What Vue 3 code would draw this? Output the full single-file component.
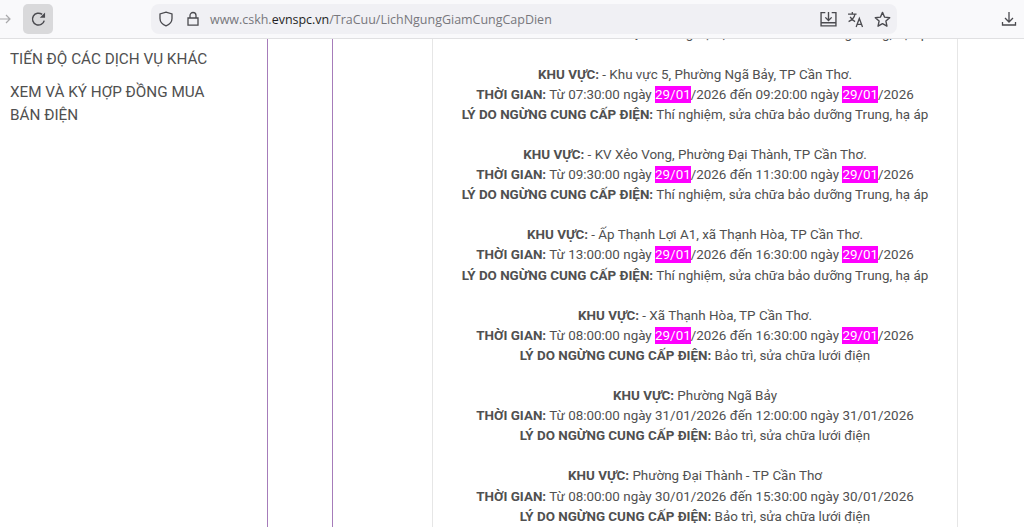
<script setup>
const hl = '29/01'
const rows = [
  { area: '- Khu vực 5, Phường Ngã Bảy, TP Cần Thơ.', from: '07:30:00', d1: hl, to: '09:20:00', d2: hl, reason: 'Thí nghiệm, sửa chữa bảo dưỡng Trung, hạ áp', mark: true },
  { area: '- KV Xẻo Vong, Phường Đại Thành, TP Cần Thơ.', from: '09:30:00', d1: hl, to: '11:30:00', d2: hl, reason: 'Thí nghiệm, sửa chữa bảo dưỡng Trung, hạ áp', mark: true },
  { area: '- Ấp Thạnh Lợi A1, xã Thạnh Hòa, TP Cần Thơ.', from: '13:00:00', d1: hl, to: '16:30:00', d2: hl, reason: 'Thí nghiệm, sửa chữa bảo dưỡng Trung, hạ áp', mark: true },
  { area: '- Xã Thạnh Hòa, TP Cần Thơ.', from: '08:00:00', d1: hl, to: '16:30:00', d2: hl, reason: 'Bảo trì, sửa chữa lưới điện', mark: true },
  { area: 'Phường Ngã Bảy', from: '08:00:00', d1: '31/01', to: '12:00:00', d2: '31/01', reason: 'Bảo trì, sửa chữa lưới điện', mark: false },
  { area: 'Phường Đại Thành - TP Cần Thơ', from: '08:00:00', d1: '30/01', to: '15:30:00', d2: '30/01', reason: 'Bảo trì, sửa chữa lưới điện', mark: false }
]
</script>

<template>
  <div class="page">
    <header class="toolbar">
      <svg class="forward" width="14" height="14" viewBox="0 0 14 14"><path d="M-1 7h11M6 3l4 4-4 4" fill="none" stroke="#a9a9ab" stroke-width="1.2"/></svg>
      <div class="reload">
        <svg width="17" height="17" viewBox="0 0 16 16"><path d="M13.4 9A5.6 5.6 0 1 1 11.4 3.2" fill="none" stroke="#4a4a4f" stroke-width="1.4"/><path d="M14.2 1.4v5h-5z" fill="#4a4a4f"/></svg>
      </div>
      <div class="urlbar">
        <svg class="ic" width="16" height="16" viewBox="0 0 16 16"><path d="M8 1.2 14 3v4.4c0 3.6-2.6 6-6 7.4-3.4-1.4-6-3.8-6-7.4V3z" fill="none" stroke="#4a4a4f" stroke-width="1.3"/></svg>
        <svg class="ic lock" width="16" height="16" viewBox="0 0 16 16"><path d="M5 7V4.5a3 3 0 0 1 6 0V7M3 7h10v7.2H3z" fill="none" stroke="#4a4a4f" stroke-width="1.3"/></svg>
        <span class="url"><span class="dim">www.cskh.</span><span class="host">evnspc.vn</span><span class="dim">/TraCuu/LichNgungGiamCungCapDien</span></span>
        <span class="spacer"></span>
        <svg class="act" width="17" height="17" viewBox="0 0 16 16"><path d="M5 1.5H1v12.5h14V1.5h-4M8 1v7.5M5 6l3 3 3-3M1 11h14" fill="none" stroke="#4a4a4f" stroke-width="1.3"/></svg>
        <svg class="act" width="17" height="17" viewBox="0 0 16 16"><path d="M1 3h8M5 1v2M7.5 3C7 6 4.5 8.6 1.5 10M3 5.5c1 2 3 3.6 4.6 4.5M8.6 15l3-8 3 8M9.7 12.6h3.8" fill="none" stroke="#4a4a4f" stroke-width="1.2"/></svg>
        <svg class="act" width="17" height="17" viewBox="0 0 16 16"><path d="M8 1.3 10 5.8l4.8.5-3.6 3.2 1 4.8L8 11.9l-4.2 2.4 1-4.8L1.2 6.3 6 5.8z" fill="none" stroke="#4a4a4f" stroke-width="1.3" stroke-linejoin="round"/></svg>
      </div>
      <svg class="download" width="16" height="16" viewBox="0 0 16 16"><path d="M8 1v9.5M4 7l4 4 4-4M1.5 11v3h13v-3" fill="none" stroke="#4a4a4f" stroke-width="1.3"/></svg>
    </header>
    <main class="main">
      <nav class="side">
        <a class="menu">TIẾN ĐỘ CÁC DỊCH VỤ KHÁC</a>
        <a class="menu">XEM VÀ KÝ HỢP ĐỒNG MUA BÁN ĐIỆN</a>
      </nav>
      <div class="rail"></div>
      <section class="card">
        <div class="inner">
          <p class="block"><b>LÝ DO NGỪNG CUNG CẤP ĐIỆN:</b> Thí nghiệm, sửa chữa bảo dưỡng Trung, hạ áp</p>
          <p v-for="r in rows" :key="r.area" class="block">
            <b>KHU VỰC:</b> {{ r.area }}<br>
            <b>THỜI GIAN:</b> Từ {{ r.from }} ngày <mark v-if="r.mark">{{ r.d1 }}</mark><template v-else>{{ r.d1 }}</template>/2026 đến {{ r.to }} ngày <mark v-if="r.mark">{{ r.d2 }}</mark><template v-else>{{ r.d2 }}</template>/2026<br>
            <b>LÝ DO NGỪNG CUNG CẤP ĐIỆN:</b> {{ r.reason }}
          </p>
        </div>
      </section>
    </main>
  </div>
</template>

<style scoped>
.page {
  width: 1024px;
  height: 527px;
  overflow: hidden;
  background: #fff;
  font-family: Roboto, "Liberation Sans", sans-serif;
  color: #505050;
  display: flex;
  flex-direction: column;
}
.toolbar {
  height: 38px;
  flex: none;
  background: #f9f9fb;
  border-bottom: 1px solid #e0e0e2;
  display: flex;
  align-items: center;
  box-sizing: content-box;
}
.forward { margin-left: 0; margin-right: 9px; }
.reload {
  width: 30px;
  height: 30px;
  border-radius: 5px;
  background: #d9d9db;
  display: flex;
  align-items: center;
  justify-content: center;
}
.urlbar {
  margin-left: 98px;
  width: 746px;
  height: 30px;
  border-radius: 8px;
  background: #f0f0f4;
  display: flex;
  align-items: center;
  padding: 0 6px 0 7px;
  box-sizing: border-box;
}
.lock { margin-left: 11px; }
.url {
  margin-left: 9px;
  font-family: "Open Sans", "Noto Sans", sans-serif;
  font-size: 12.48px;
  white-space: nowrap;
}
.dim { color: #77777c; }
.host { color: #1f1f24; }
.spacer { flex: 1; }
.act { margin-left: 10px; }
.download { margin-left: 104px; }
.main {
  flex: 1;
  min-height: 0;
  display: flex;
  overflow: hidden;
}
.side {
  width: 268px;
  flex: none;
  box-sizing: border-box;
  border-right: 1px solid #a67cba;
  padding: 8.6px 10px 0;
}
.menu {
  display: block;
  font-size: 15.28px;
  line-height: 23.3px;
  color: #505050;
  margin-bottom: 10px;
  width: 225px;
}
.rail {
  width: 65px;
  flex: none;
  box-sizing: border-box;
  border-right: 1px solid #a67cba;
}
.card {
  margin-left: 99px;
  width: 526px;
  flex: none;
  box-sizing: border-box;
  border-left: 1px solid #e6e6e6;
  border-right: 1px solid #e6e6e6;
  overflow: hidden;
}
.inner {
  margin-top: -14.6px;
  text-align: center;
  font-size: 13.42px;
  line-height: 20.1px;
}
.block { margin: 0 0 20.1px; white-space: nowrap; }
b { font-weight: 700; }
mark {
  background: #f0f;
  color: #fff;
  padding: 1px 0;
}
</style>

<style>
html, body { margin: 0; background: #fff; }
</style>
